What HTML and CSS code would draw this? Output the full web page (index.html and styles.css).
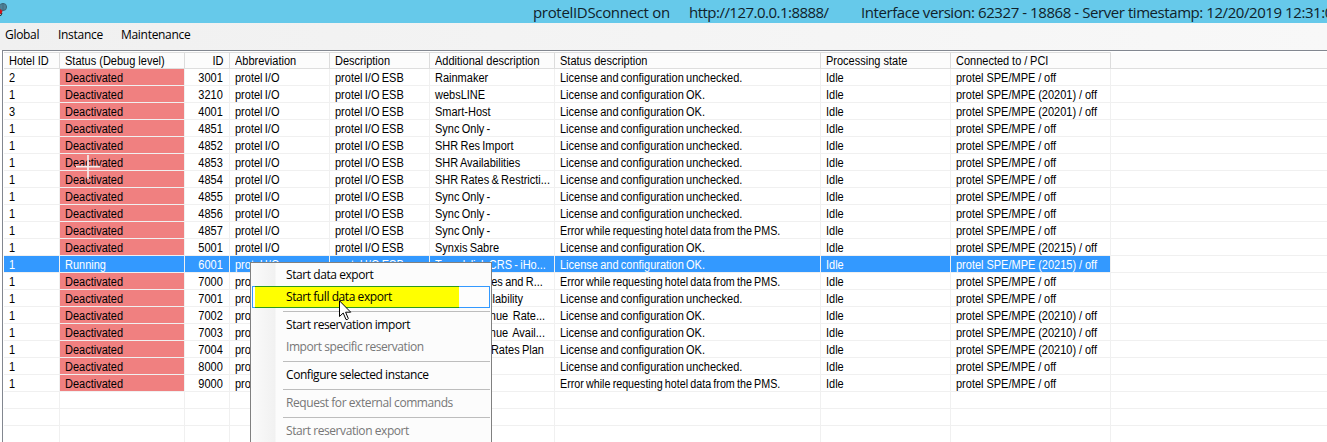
FILE: index.html
```html
<!DOCTYPE html>
<html lang="en">
<head>
<meta charset="utf-8">
<title>protelIDSconnect</title>
<link rel="stylesheet" href="styles.css">
</head>
<body>
<header class="titlebar">
  <svg class="app-icon" width="8" height="20" viewBox="0 0 8 20">
    <circle cx="3" cy="7" r="3.6" fill="#5b91a8" stroke="#3b6679" stroke-width="1"/>
    <path d="M0 7H6.5M3 3.5V10.5M1 5H5.5M1 9H5.5" stroke="#3b6679" stroke-width=".7" fill="none"/>
    <path d="M0 9L2.5 11L1.5 14H0Z" fill="#d40f16"/>
    <path d="M2 13L1 15.5H0" stroke="#333" fill="none"/>
  </svg>
  <span class="title title-app">protelIDSconnect on</span>
  <span class="title title-url">http://127.0.0.1:8888/</span>
  <span class="title title-info">Interface version: 62327 - 18868 - Server timestamp: 12/20/2019 12:31:0</span>
</header>
<nav class="menubar">
  <span class="menu m-global">Global</span>
  <span class="menu m-instance">Instance</span>
  <span class="menu m-maint">Maintenance</span>
</nav>
<main class="list" id="list"></main>
<svg class="cross" width="24" height="25" viewBox="0 0 24 25"><path d="M0 11.7H24M12 0V24" stroke="#f4eeee" stroke-width="1.7"/></svg>
<div class="context">
  <div class="item">Start data export</div>
  <div class="item selected"><span class="mark"></span><span class="label">Start full data export</span></div>
  <div class="sep"></div>
  <div class="item">Start reservation import</div>
  <div class="item off">Import specific reservation</div>
  <div class="sep"></div>
  <div class="item">Configure selected instance</div>
  <div class="sep"></div>
  <div class="item off">Request for external commands</div>
  <div class="sep"></div>
  <div class="item off">Start reservation export</div>
</div>
<svg class="pointer" width="13" height="21" viewBox="0 0 13 21"><path d="M.5 .8V16.5L4.2 13L7 19.5Q8.5 20.2 9.3 18.5L6.6 12.2H11.7Z" fill="#fff" stroke="#000" stroke-width="1"/></svg>
<script src="app.js"></script>
</body>
</html>
```

FILE: styles.css
```css
* { box-sizing: border-box; }
body {
  margin: 0;
  width: 1327px;
  height: 442px;
  overflow: hidden;
  position: relative;
  display: flex;
  flex-direction: column;
  background: #fff;
  color: #000;
  font-family: "Liberation Sans", Arial, sans-serif;
}
.titlebar {
  flex: none;
  height: 23px;
  display: flex;
  background: #66c9ea;
  overflow: hidden;
  white-space: pre;
  font: 15px/24px "Open Sans", sans-serif;
  color: #10222b;
}
.app-icon { flex: none; width: 8px; margin-right: 525px; }
.title { flex: none; }
.title-app { width: 156px; letter-spacing: -0.32px; }
.title-url { width: 172px; letter-spacing: -0.52px; }
.title-info { letter-spacing: -0.43px; }
.menubar {
  flex: none;
  height: 27px;
  display: flex;
  padding-left: 5px;
  background: linear-gradient(90deg, #f0f0f0, #f8f8f8);
  font: 12px/24px "Open Sans", sans-serif;
  letter-spacing: -0.3px;
}
.m-global { width: 53px; }
.m-instance { width: 63px; }
.list {
  flex: 1;
  margin-left: 2px;
  border-left: 1px solid #828790;
  border-top: 1px solid #828790;
  padding: 1px 0 0 1px;
  font-size: 12.5px;
  overflow: hidden;
}
.row {
  height: 17px;
  display: flex;
  border-bottom: 1px solid #f0f0f0;
  line-height: 19px;
  white-space: pre;
}
.row.head { border-bottom-color: #dedede; background: #fcfcfc; }
.cell {
  flex: none;
  height: 16px;
  padding-left: 5px;
  border-right: 1px solid #f0f0f0;
  overflow: hidden;
}
.head .cell { border-right-color: #dcdcdc; border-top: 1px solid #dedede; line-height: 16px; }
.cell span { display: inline-block; transform: scaleX(.88); transform-origin: 0 50%; word-spacing: -0.9px; }
.head .cell span { word-spacing: 0; }
.cell.c8 span { word-spacing: -0.2px; }
.c0 { width: 56px; }
.c1 { width: 125px; }
.c2 { width: 45px; padding: 0 6px 0 0; text-align: right; }
.c2 span { transform-origin: 100% 50%; }
.c3, .c4 { width: 100px; }
.c5 { width: 125px; }
.c6 { width: 266px; }
.c7 { width: 130px; }
.c8 { width: 160px; }
.cell .tight { transform: scaleX(.857); }
.alert { background: #f08080; }
.row.active .cell { background: #3399ff; color: #fff; }
.cross { position: absolute; left: 76px; top: 155px; }
.context {
  position: absolute;
  left: 250px;
  top: 262px;
  width: 242px;
  height: 190px;
  padding: 1px;
  border: 1px solid #808080;
  background: linear-gradient(90deg, #fbfbfb 0, #f1f1f1 24px, #fcfcfc 25px);
  font: 12px/22px "Open Sans", sans-serif;
  letter-spacing: -0.43px;
}
.item { height: 22px; padding-left: 34px; white-space: pre; }
.off { color: #777; }
.selected { position: relative; border: 1px solid #3399ff; padding-left: 33px; line-height: 20px; background: #fdfdfd; }
.mark { position: absolute; left: 2px; top: -1px; width: 204px; height: 22px; background: #ff0; border: solid #2f9a1e; border-width: 1px 0; }
.label { position: relative; }
.sep { height: 6px; margin: 0 0 0 31px; background: linear-gradient(#bdbdbd, #bdbdbd) 0 3px / 100% 1px no-repeat; }
.pointer { position: absolute; left: 339px; top: 300px; }
```

FILE: app.js
```js
const headings = ["Hotel ID", "Status (Debug level)", "ID", "Abbreviation", "Description",
  "Additional description", "Status description", "Processing state", "Connected to / PCI"];
const U = "License and configuration unchecked.";
const K = "License and configuration OK.";
const E = "Error while requesting hotel data from the PMS.";
const data = [
  ["2", "3001", "Rainmaker", U, ""],
  ["1", "3210", "websLINE", K, "20201"],
  ["3", "4001", "Smart-Host", K, "20201"],
  ["1", "4851", "Sync Only -", U, ""],
  ["1", "4852", "SHR Res Import", U, ""],
  ["1", "4853", "SHR Availabilities", U, ""],
  ["1", "4854", "SHR Rates & Restricti...", U, ""],
  ["1", "4855", "Sync Only -", U, ""],
  ["1", "4856", "Sync Only -", U, ""],
  ["1", "4857", "Sync Only -", E, ""],
  ["1", "5001", "Synxis Sabre", K, "20215"],
  ["1", "6001", "Travelclick CRS - iHo...", K, "20215"],
  ["1", "7000", "TravelClick es and R...", E, ""],
  ["1", "7001", "Travel   Availability", U, ""],
  ["1", "7002", "Ideas Revenue  Rate...", K, "20210"],
  ["1", "7003", "Ideas Revenue  Avail...", K, "20210"],
  ["1", "7004", "Revenue & Rates Plan", K, "20210"],
  ["1", "8000", "", U, ""],
  ["1", "9000", "", E, ""]
];
const list = document.getElementById("list");

function addRow(values, kind, alert) {
  const row = document.createElement("div");
  row.className = "row " + kind;
  values.forEach((text, i) => {
    const cell = document.createElement("div");
    cell.className = "cell c" + i + (alert && i === 1 ? " alert" : "");
    const label = document.createElement("span");
    label.textContent = text;
    if (text === E) label.className = "tight";
    cell.append(label);
    row.append(cell);
  });
  list.append(row);
}

addRow(headings, "head", false);
for (const [hotel, id, extra, status, port] of data) {
  const active = id === "6001";
  const link = "protel SPE/MPE " + (port ? "(" + port + ") " : "") + "/ off";
  addRow([hotel, active ? "Running" : "Deactivated", id, "protel I/O", "protel I/O ESB",
    extra, status, "Idle", link], active ? "active" : "", !active);
}
for (let i = 0; i < 4; i++) addRow(Array(9).fill(""), "", false);
```
